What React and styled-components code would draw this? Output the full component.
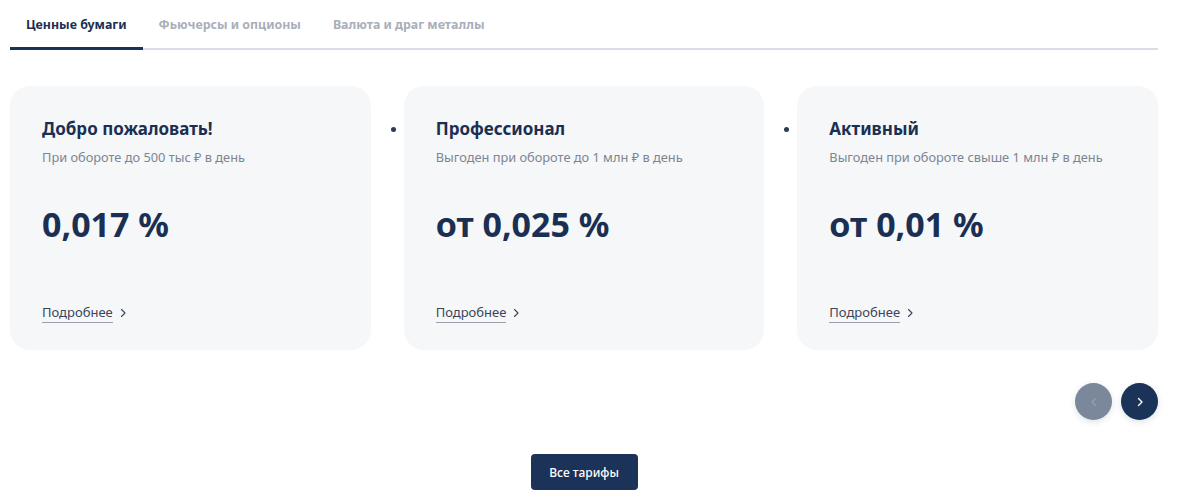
import styled, { createGlobalStyle } from "styled-components";

const Global = createGlobalStyle`
  body {
    margin: 0;
    background: #fff;
    font-family: "Noto Sans", "Open Sans", sans-serif;
  }
`;

const Page = styled.div`
  width: 1200px;
  padding: 0 42px 0 10px;
  box-sizing: border-box;
`;

const Tabs = styled.div`
  display: flex;
  border-bottom: 2px solid #d9dee6;
  height: 50px;
  box-sizing: border-box;
`;

const Tab = styled.div`
  padding: 16px 16px 0;
  font-size: 12.4px;
  font-weight: 700;
  color: ${(props) => (props.active ? "#1b2f52" : "#a9afb9")};
  border-bottom: ${(props) => (props.active ? "3px solid #1b3358" : "none")};
  margin-bottom: -2px;
  cursor: pointer;
`;

const Cards = styled.ul`
  list-style: none;
  margin: 36px 0 0;
  padding: 0;
  display: flex;
  gap: 33px;
`;

const Card = styled.li`
  position: relative;
  width: 361px;
  height: 264px;
  box-sizing: border-box;
  background: #f5f7f9;
  border-radius: 20px;
  padding: 31px 32px 0;
  display: flex;
  flex-direction: column;

  &::before {
    content: "";
    display: ${(props) => (props.bullet ? "block" : "none")};
    position: absolute;
    left: -13px;
    top: 41px;
    width: 5px;
    height: 5px;
    border-radius: 50%;
    background: #2b3a55;
  }
`;

const Title = styled.div`
  font-size: 17px;
  font-weight: 700;
  color: #1b2f52;
  line-height: 24px;
`;

const Sub = styled.div`
  margin-top: 7px;
  font-size: 12.8px;
  color: #7d8593;
  line-height: 18px;
`;

const Rate = styled.div`
  margin-top: 36px;
  font-size: 34px;
  font-weight: 700;
  color: #1b2f52;
  line-height: 44px;
`;

const More = styled.a`
  margin-top: 57px;
  display: inline-flex;
  align-items: center;
  gap: 5px;
  font-size: 13px;
  color: #3b4458;
  text-decoration: none;
  cursor: pointer;
  align-self: flex-start;

  span {
    border-bottom: 1px solid #9aa1ad;
    line-height: 19px;
  }
`;

const Arrows = styled.div`
  display: flex;
  justify-content: flex-end;
  gap: 9px;
  margin-top: 33px;
`;

const Round = styled.button`
  width: 37px;
  height: 37px;
  border-radius: 50%;
  border: none;
  padding: 0;
  display: flex;
  align-items: center;
  justify-content: center;
  background: ${(props) => (props.disabled ? "#7b879b" : "#1b3358")};
  box-shadow: 0 2px 6px rgba(27, 51, 88, 0.15);
  cursor: pointer;
`;

const Footer = styled.div`
  display: flex;
  justify-content: center;
  margin-top: 34px;
`;

const AllButton = styled.button`
  width: 107px;
  height: 36px;
  border: none;
  border-radius: 4px;
  background: #1b3358;
  color: #fff;
  font-family: "Noto Sans", sans-serif;
  font-size: 12px;
  font-weight: 500;
  cursor: pointer;
`;

const Chevron = ({ dir = "right", color, size = 10, width = 1.1 }) => (
  <svg width={size} height={size} viewBox="0 0 10 10">
    <path
      d={dir === "right" ? "M3.5 1.5 L7 5 L3.5 8.5" : "M6.5 1.5 L3 5 L6.5 8.5"}
      fill="none"
      stroke={color}
      strokeWidth={width}
      strokeLinecap="round"
      strokeLinejoin="round"
    />
  </svg>
);

const plans = [
  { title: "Добро пожаловать!", sub: "При обороте до 500 тыс ₽ в день", rate: "0,017 %" },
  { title: "Профессионал", sub: "Выгоден при обороте до 1 млн ₽ в день", rate: "от 0,025 %" },
  { title: "Активный", sub: "Выгоден при обороте свыше 1 млн ₽ в день", rate: "от 0,01 %" },
];

export default function App() {
  return (
    <Page>
      <Global />
      <Tabs>
        <Tab active>Ценные бумаги</Tab>
        <Tab>Фьючерсы и опционы</Tab>
        <Tab>Валюта и драг металлы</Tab>
      </Tabs>
      <Cards>
        {plans.map((p, i) => (
          <Card key={p.title} bullet={i > 0}>
            <Title>{p.title}</Title>
            <Sub>{p.sub}</Sub>
            <Rate>{p.rate}</Rate>
            <More>
              <span>Подробнее</span>
              <Chevron color="#3b4458" />
            </More>
          </Card>
        ))}
      </Cards>
      <Arrows>
        <Round disabled>
          <Chevron dir="left" color="#95a0b1" />
        </Round>
        <Round>
          <Chevron color="#fff" width={1.4} />
        </Round>
      </Arrows>
      <Footer>
        <AllButton>Все тарифы</AllButton>
      </Footer>
    </Page>
  );
}
